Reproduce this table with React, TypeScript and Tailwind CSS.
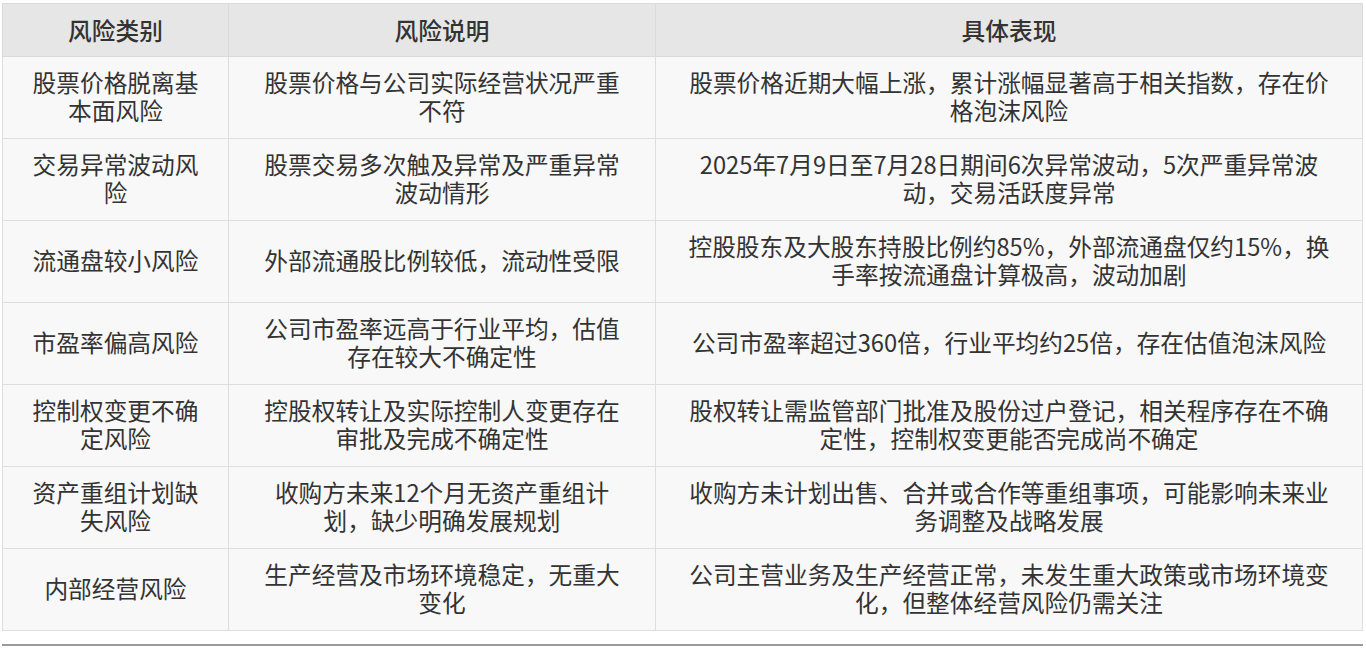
import React from "react";

const rows: [string[], string[], string[]][] = [
  [["股票价格脱离基", "本面风险"], ["股票价格与公司实际经营状况严重", "不符"], ["股票价格近期大幅上涨，累计涨幅显著高于相关指数，存在价", "格泡沫风险"]],
  [["交易异常波动风", "险"], ["股票交易多次触及异常及严重异常", "波动情形"], ["2025年7月9日至7月28日期间6次异常波动，5次严重异常波", "动，交易活跃度异常"]],
  [["流通盘较小风险"], ["外部流通股比例较低，流动性受限"], ["控股股东及大股东持股比例约85%，外部流通盘仅约15%，换", "手率按流通盘计算极高，波动加剧"]],
  [["市盈率偏高风险"], ["公司市盈率远高于行业平均，估值", "存在较大不确定性"], ["公司市盈率超过360倍，行业平均约25倍，存在估值泡沫风险"]],
  [["控制权变更不确", "定风险"], ["控股权转让及实际控制人变更存在", "审批及完成不确定性"], ["股权转让需监管部门批准及股份过户登记，相关程序存在不确", "定性，控制权变更能否完成尚不确定"]],
  [["资产重组计划缺", "失风险"], ["收购方未来12个月无资产重组计", "划，缺少明确发展规划"], ["收购方未计划出售、合并或合作等重组事项，可能影响未来业", "务调整及战略发展"]],
  [["内部经营风险"], ["生产经营及市场环境稳定，无重大", "变化"], ["公司主营业务及生产经营正常，未发生重大政策或市场环境变", "化，但整体经营风险仍需关注"]],
];

function Lines({ lines }: { lines: string[] }) {
  return (
    <>
      {lines.map((l, i) => (
        <span key={i} className="block whitespace-nowrap">
          {l}
        </span>
      ))}
    </>
  );
}

export default function App() {
  return (
    <div
      className="w-[1366px] h-[649px] bg-white overflow-hidden text-[#333333]"
      style={{ fontFamily: '"Noto Sans CJK SC", "Noto Sans", sans-serif' }}
    >
      <div className="pt-[3px] pl-[2px] pr-[4px]">
        <table className="w-[1360px] border-collapse table-fixed text-[23.7px] leading-[28px]">
          <colgroup>
            <col className="w-[226px]" />
            <col className="w-[427px]" />
            <col className="w-[707px]" />
          </colgroup>
          <thead>
            <tr className="h-[53px] bg-[#e6e6e6]">
              <th className="border border-[#dadada] font-medium text-center">风险类别</th>
              <th className="border border-[#dadada] font-medium text-center">风险说明</th>
              <th className="border border-[#dadada] font-medium text-center">具体表现</th>
            </tr>
          </thead>
          <tbody>
            {rows.map((r, i) => (
              <tr key={i} className="h-[82px] bg-[#f8f8f8]">
                {r.map((c, j) => (
                  <td key={j} className="border border-[#dedede] text-center align-middle px-2 pb-[3px]">
                    <Lines lines={c} />
                  </td>
                ))}
              </tr>
            ))}
          </tbody>
        </table>
        <div className="mt-[13px] h-[2px] w-[1361px] bg-[#9a9a9a]" />
      </div>
    </div>
  );
}
